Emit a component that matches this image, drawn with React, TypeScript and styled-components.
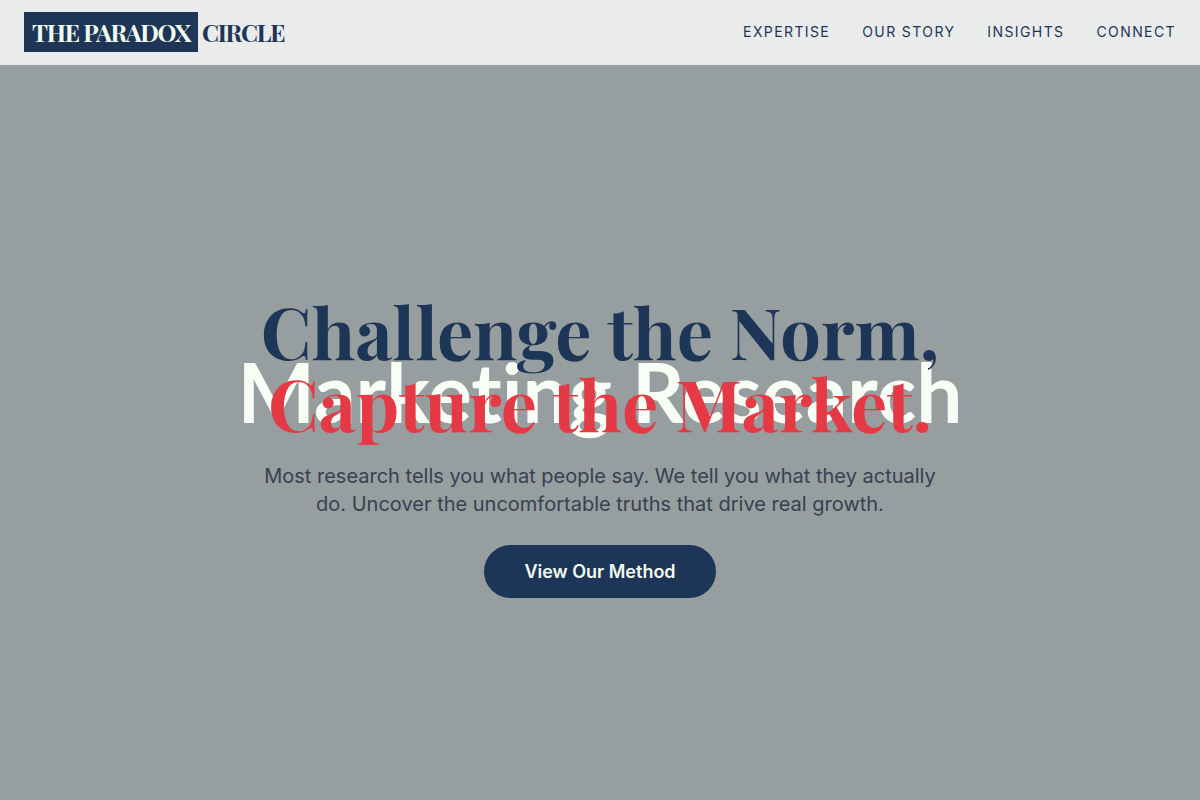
import React from "react";
import styled, { createGlobalStyle } from "styled-components";

const navy = "#1d3557";
const mint = "#f1faee";
const red = "#e63946";

const GlobalStyle = createGlobalStyle`
  * { box-sizing: border-box; }
  body {
    margin: 0;
    background: #969e9f;
    color: ${navy};
    font-family: Inter, "Liberation Sans", sans-serif;
  }
`;

const Page = styled.div`
  display: flex;
  flex-direction: column;
  min-height: 100vh;
`;

const Header = styled.header`
  display: flex;
  align-items: center;
  justify-content: space-between;
  padding: 12px 24px;
  background: #e9eceb;
  border-bottom: 1px solid #e3e7e7;
`;

const Logo = styled.a`
  display: flex;
  align-items: center;
  gap: 4px;
  color: ${navy};
  font: 700 24px/40px "Playfair Display", "Liberation Serif", serif;
  letter-spacing: -1.2px;
  text-decoration: none;
  white-space: nowrap;
`;

const LogoMark = styled.span`
  padding: 0 8px;
  background: ${navy};
  color: ${mint};
`;

const Nav = styled.nav`
  display: flex;
  gap: 32px;
`;

const NavLink = styled.a`
  color: ${navy};
  font-size: 14px;
  line-height: 20px;
  letter-spacing: 1.4px;
  text-decoration: none;
  text-transform: uppercase;
`;

const Hero = styled.main`
  display: flex;
  flex: 1;
  flex-direction: column;
  align-items: center;
  justify-content: center;
  padding: 26px 24px 0;
  text-align: center;
`;

const Heading = styled.div`
  position: relative;
`;

const Backdrop = styled.span`
  position: absolute;
  inset: 0;
  display: flex;
  align-items: center;
  justify-content: center;
  padding-top: 50px;
  color: #f8fdf5;
  font: 700 82px/96px Lato, sans-serif;
  font-variant-ligatures: none;
  white-space: nowrap;
`;

const Title = styled.h1`
  position: relative;
  margin: 0;
  font: 700 72px/72px "Playfair Display", "Liberation Serif", serif;
`;

const Line = styled.span<{ $accent?: boolean }>`
  display: block;
  color: ${(p) => (p.$accent ? red : navy)};
`;

const Lead = styled.p`
  max-width: 672px;
  margin: 24px 0 27px;
  color: #374151;
  font-size: 20px;
  line-height: 28px;
`;

const Action = styled.button`
  padding: 12px 40px;
  border: 0;
  border-radius: 32px;
  background: ${navy};
  color: ${mint};
  font: 600 18px/29px Inter, "Liberation Sans", sans-serif;
  cursor: pointer;
`;

const links = ["Expertise", "Our Story", "Insights", "Connect"];

export default function App() {
  return (
    <Page>
      <GlobalStyle />
      <Header>
        <Logo href="#">
          <LogoMark>THE PARADOX</LogoMark>
          <span>CIRCLE</span>
        </Logo>
        <Nav>
          {links.map((label) => (
            <NavLink key={label} href="#">
              {label}
            </NavLink>
          ))}
        </Nav>
      </Header>
      <Hero>
        <Heading>
          <Backdrop>Marketing Research</Backdrop>
          <Title>
            <Line>Challenge the Norm,</Line>
            <Line $accent>Capture the Market.</Line>
          </Title>
        </Heading>
        <Lead>
          Most research tells you what people say. We tell you what they
          actually do. Uncover the uncomfortable truths that drive real growth.
        </Lead>
        <Action type="button">View Our Method</Action>
      </Hero>
    </Page>
  );
}
